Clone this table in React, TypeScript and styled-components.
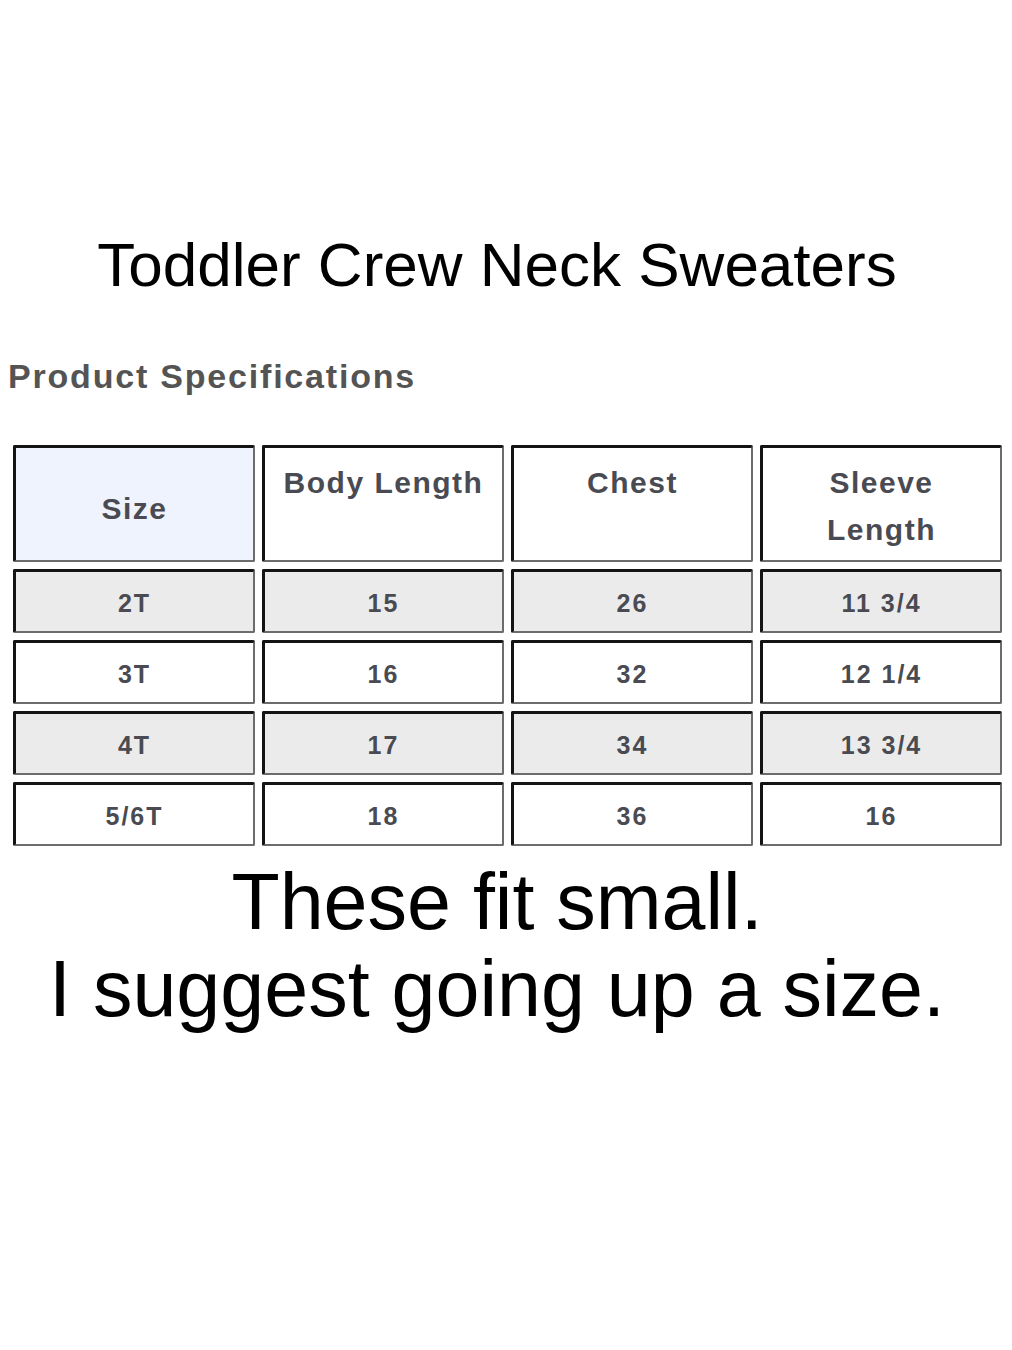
import { createGlobalStyle } from 'styled-components';
import styled from 'styled-components';

const GlobalStyle = createGlobalStyle`
  html, body {
    margin: 0;
    padding: 0;
    background: #ffffff;
  }
  body {
    font-family: "Liberation Sans", Arial, sans-serif;
  }
`;

const headers = ['Size', 'Body Length', 'Chest', 'Sleeve Length'];

const rows = [
  ['2T', '15', '26', '11 3/4'],
  ['3T', '16', '32', '12 1/4'],
  ['4T', '17', '34', '13 3/4'],
  ['5/6T', '18', '36', '16'],
];

export default function App() {
  return (
    <>
      <GlobalStyle />
      <Page>
        <Title>Toddler Crew Neck Sweaters</Title>
        <SpecHeading>Product Specifications</SpecHeading>
        <Table>
          {headers.map((h, i) => (
            <HeadCell key={h} first={i === 0}>
              {h === 'Sleeve Length' ? (
                <>
                  Sleeve
                  <br />
                  Length
                </>
              ) : (
                h
              )}
            </HeadCell>
          ))}
          {rows.map((row, r) =>
            row.map((value, c) => (
              <DataCell key={`${r}-${c}`} shaded={r % 2 === 0}>
                {value}
              </DataCell>
            ))
          )}
        </Table>
        <Note>
          These fit small.
          <br />
          I suggest going up a size.
        </Note>
      </Page>
    </>
  );
}

const Page = styled.div`
  width: 1012px;
  height: 1350px;
  display: flex;
  flex-direction: column;
  padding-top: 230px;
  box-sizing: border-box;
`;

const Title = styled.h1`
  margin: 0;
  padding-right: 18px;
  font-family: "Liberation Sans", Arial, sans-serif;
  font-weight: normal;
  font-size: 62px;
  line-height: 70px;
  color: #000;
  text-align: center;
`;

const SpecHeading = styled.h2`
  margin: 57px 0 0 8px;
  font-family: "Liberation Sans", Arial, sans-serif;
  font-weight: bold;
  font-size: 34px;
  line-height: 38px;
  letter-spacing: 1.8px;
  color: #545454;
`;

const Table = styled.div`
  margin: 50px 0 0 13px;
  width: 989px;
  display: grid;
  grid-template-columns: repeat(4, 1fr);
  grid-template-rows: 117px repeat(4, 64px);
  gap: 7px;
`;

const Cell = styled.div`
  box-sizing: border-box;
  border-top: 3px solid #141414;
  border-left: 3px solid #141414;
  border-right: 2px solid #6c6c6c;
  border-bottom: 2px solid #6c6c6c;
  border-radius: 2px;
  display: flex;
  justify-content: center;
  text-align: center;
  font-family: "Liberation Sans", Arial, sans-serif;
  font-weight: bold;
  color: #4a4b52;
`;

const HeadCell = styled(Cell)<{ first?: boolean }>`
  background: ${(p) => (p.first ? '#eef3fd' : '#ffffff')};
  align-items: ${(p) => (p.first ? 'center' : 'flex-start')};
  padding-top: ${(p) => (p.first ? '8px' : '11px')};
  font-size: 30px;
  line-height: 47px;
  letter-spacing: 1.5px;
`;

const DataCell = styled(Cell)<{ shaded?: boolean }>`
  background: ${(p) => (p.shaded ? '#ebebeb' : '#ffffff')};
  align-items: center;
  padding-top: 3px;
  font-size: 25px;
  letter-spacing: 2px;
`;

const Note = styled.p`
  margin: 12px 0 0;
  padding-right: 18px;
  font-family: "Liberation Sans", Arial, sans-serif;
  font-size: 79px;
  line-height: 87px;
  color: #000;
  text-align: center;
`;
